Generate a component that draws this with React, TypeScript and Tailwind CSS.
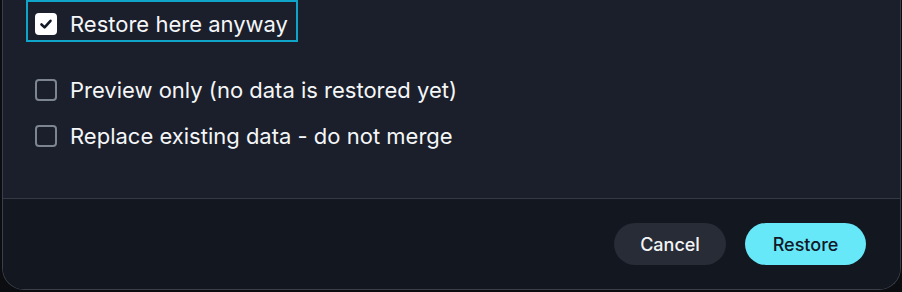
function Check({ checked }: { checked: boolean }) {
  if (checked) {
    return (
      <span className="flex h-[22px] w-[22px] shrink-0 items-center justify-center rounded-[4px] bg-white">
        <svg width="14" height="14" viewBox="0 0 14 14" fill="none">
          <path d="M2.5 7.5 L5.6 10.4 L11.5 3.8" stroke="#111827" strokeWidth="2.6" strokeLinecap="round" strokeLinejoin="round" />
        </svg>
      </span>
    );
  }
  return <span className="h-[22px] w-[22px] shrink-0 rounded-[4px] border-2 border-[#7d8591]" />;
}

export default function App() {
  return (
    <div className="h-[292px] w-[902px] bg-[#0b0d11] font-['Inter',sans-serif]">
      <div className="ml-[2px] flex h-[290px] w-[899px] flex-col overflow-hidden rounded-b-[22px] border border-t-0 border-[#3a3f4a]">
        <div className="flex h-[198px] flex-col bg-[#1a1f2b] pl-[23px]">
          <label className="flex h-[42px] w-[272px] items-start gap-[13px] border-2 border-[#0ea5c9] pl-[7px] pt-[11px]">
            <Check checked />
            <span className="-mt-[2px] text-[22px] leading-[26px] text-[#f5f6f8]">Restore here anyway</span>
          </label>
          <div className="mt-[28px] flex flex-col gap-[6px]">
            <label className="flex h-[40px] items-center gap-[13px] pl-[9px]">
              <Check checked={false} />
              <span className="text-[22px] leading-[26px] text-[#f5f6f8]">Preview only (no data is restored yet)</span>
            </label>
            <label className="flex h-[40px] items-center gap-[13px] pl-[9px]">
              <Check checked={false} />
              <span className="text-[22px] leading-[26px] text-[#f5f6f8]">Replace existing data - do not merge</span>
            </label>
          </div>
        </div>
        <div className="flex flex-1 items-center justify-end gap-[19px] border-t border-[#343945] bg-[#121720] pr-[34px]">
          <button className="h-[42px] w-[112px] rounded-full bg-[#272c36] text-[18px] font-medium text-[#f3f4f6]">Cancel</button>
          <button className="h-[42px] w-[121px] rounded-full bg-[#67e8f9] text-[18px] font-medium text-[#111827]">Restore</button>
        </div>
      </div>
    </div>
  );
}
